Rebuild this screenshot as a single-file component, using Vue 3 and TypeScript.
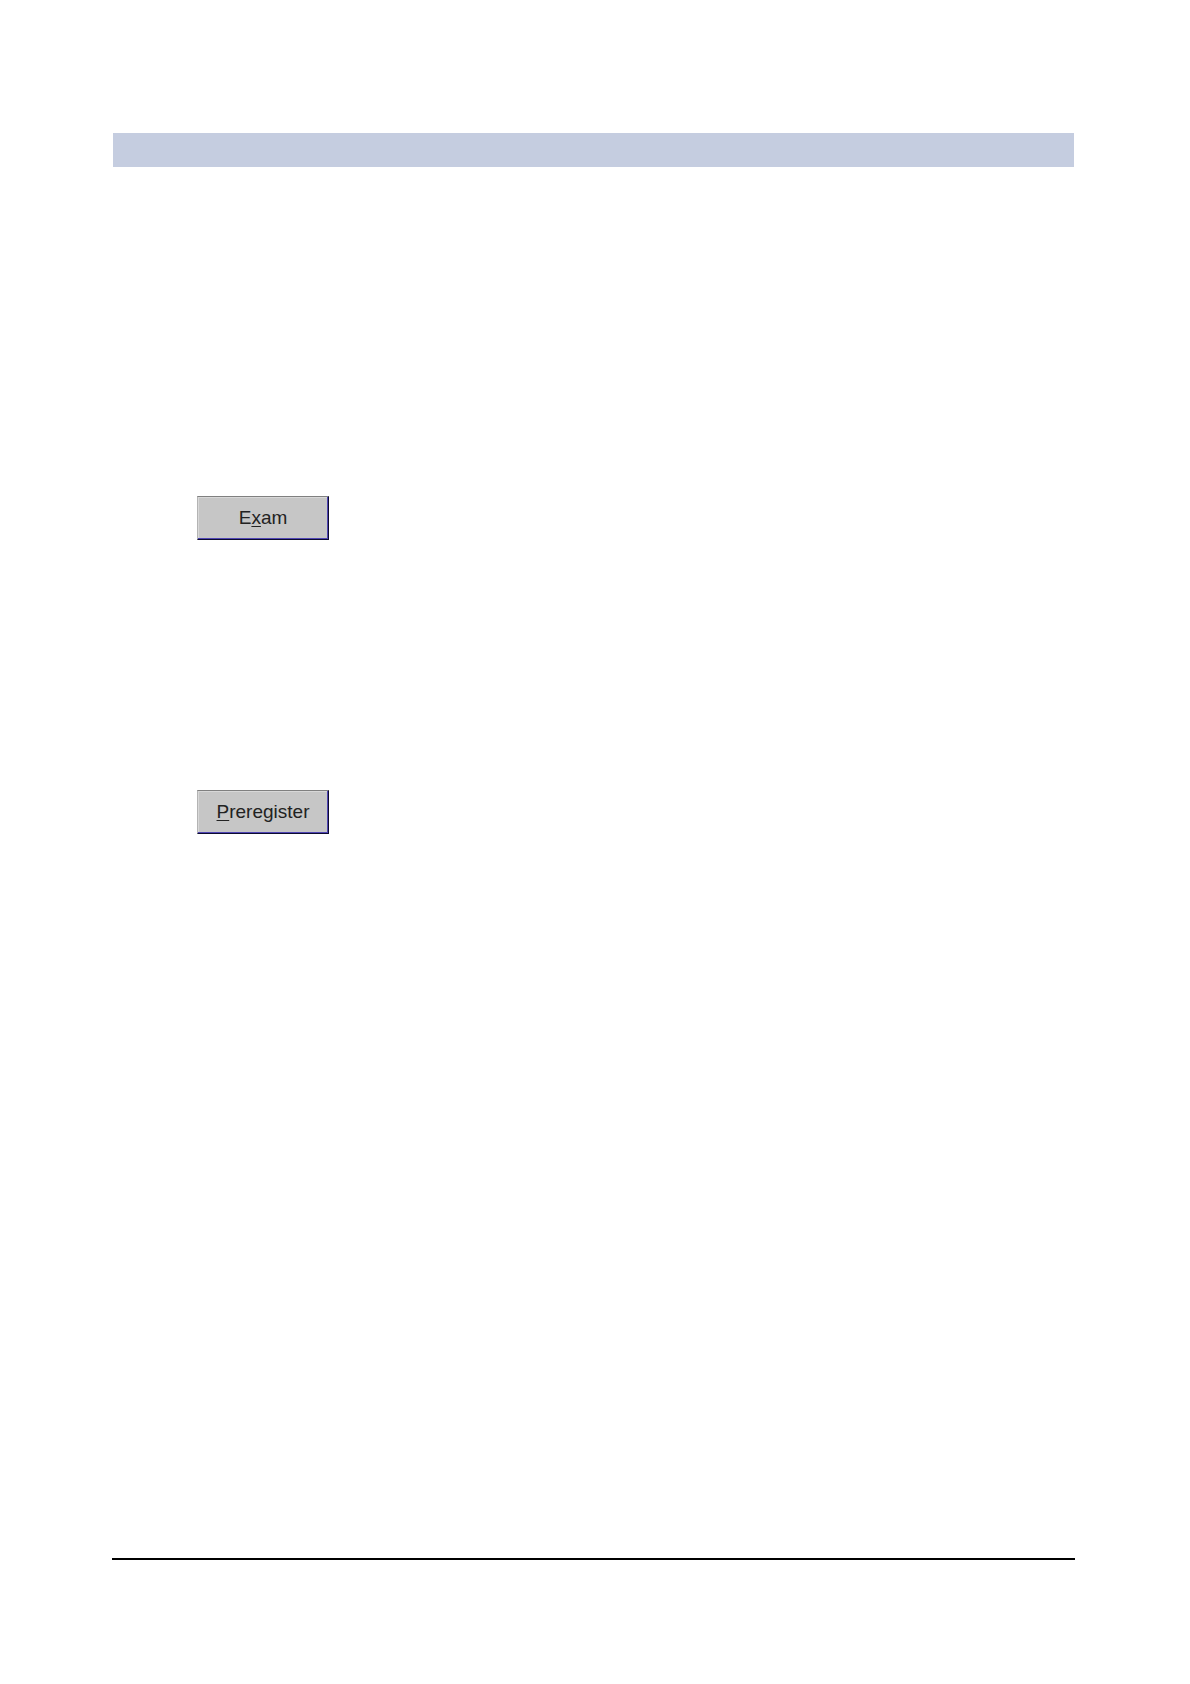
<script setup lang="ts">
interface Action {
  key: string
  before: string
  mnemonic: string
  after: string
}

const actions: Action[] = [
  { key: 'x', before: 'E', mnemonic: 'x', after: 'am' },
  { key: 'p', before: '', mnemonic: 'P', after: 'reregister' },
]
</script>

<template>
  <div class="page">
    <header class="band"></header>
    <main class="content">
      <section v-for="action in actions" :key="action.key" class="entry">
        <button type="button" class="action" :accesskey="action.key">
          <span>{{ action.before }}<u>{{ action.mnemonic }}</u>{{ action.after }}</span>
        </button>
      </section>
    </main>
    <footer class="rule"></footer>
  </div>
</template>

<style>
body {
  margin: 0;
  background: #fff;
}
</style>

<style scoped>
.page {
  box-sizing: border-box;
  display: flex;
  flex-direction: column;
  min-height: 100vh;
  padding: 133px 115px 124px 112px;
}

.band {
  height: 34px;
  margin: 0 1px;
  background: #c5cde0;
}

.content {
  flex: 1;
  padding: 329px 0 0 85px;
}

.entry {
  min-height: 294px;
}

.action {
  box-sizing: border-box;
  display: flex;
  align-items: center;
  justify-content: center;
  width: 132px;
  height: 44px;
  padding: 0;
  border: 1px solid;
  border-color: #808080 #0c0a30 #0c0a30 #b4b4b4;
  border-radius: 0;
  background: #c6c6c6;
  box-shadow: inset -1px -1px #5046b4, inset 1px 1px #d8d8d8;
  color: #222;
  font: 19px/24px "Liberation Sans", Arial, sans-serif;
}

.action u {
  text-decoration-thickness: 1px;
  text-underline-offset: 2px;
}

.rule {
  height: 2px;
  background: #000;
}
</style>
